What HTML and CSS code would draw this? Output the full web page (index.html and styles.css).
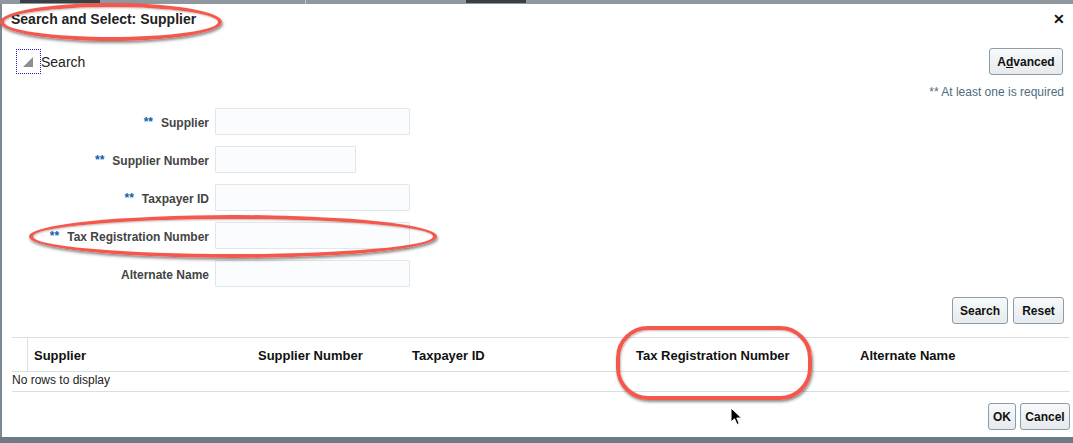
FILE: index.html
```html
<!DOCTYPE html>
<html>
<head>
<meta charset="utf-8">
<link rel="stylesheet" href="styles.css">
</head>
<body>
<div class="backdrop"><span class="blob b1"></span><span class="blob b2"></span><span class="blob b3"></span></div>
<div class="dialog">
  <div class="dlg-head">
    <span class="title">Search and Select: Supplier</span>
    <span class="close">&#x2715;</span>
  </div>
  <div class="search-bar">
    <div class="disclose"><span class="tri"></span></div>
    <span class="search-label">Search</span>
    <button class="btn adv">A<u>d</u>vanced</button>
  </div>
  <div class="req-note">** At least one is required</div>
  <div class="form">
    <label class="lbl"><span class="star">**</span>Supplier</label><span class="inp w195"></span>
    <label class="lbl"><span class="star">**</span>Supplier Number</label><span class="inp w141"></span>
    <label class="lbl"><span class="star">**</span>Taxpayer ID</label><span class="inp w195"></span>
    <label class="lbl"><span class="star">**</span>Tax Registration Number</label><span class="inp w195"></span>
    <label class="lbl">Alternate Name</label><span class="inp w195"></span>
  </div>
  <div class="actions">
    <button class="btn">Search</button>
    <button class="btn">Reset</button>
  </div>
  <div class="table">
    <div class="thead">
      <div class="sel"></div>
      <div class="th c1">Supplier</div>
      <div class="th c2">Supplier Number</div>
      <div class="th c3">Taxpayer ID</div>
      <div class="th c4">Tax Registration Number</div>
      <div class="th c5">Alternate Name</div>
    </div>
    <div class="empty">No rows to display</div>
  </div>
  <div class="footer">
    <button class="btn">OK</button>
    <button class="btn">Cancel</button>
  </div>

  <div class="mark mark-title"></div>
  <div class="mark mark-field"></div>
  <div class="mark mark-col"></div>
  <svg class="cursor" width="14" height="20" viewBox="0 0 14 20"><path d="M1 1 L1 15 L4.5 11.8 L7 17.5 L9.2 16.5 L6.8 11 L11.5 11 Z" fill="#000" stroke="#fff" stroke-width="1"/></svg>
</div>
<div class="bottom-strip"></div>
</body>
</html>
```
FILE: styles.css
```css
* { box-sizing: border-box; }
html, body { margin: 0; padding: 0; }
body {
  width: 1073px;
  height: 443px;
  overflow: hidden;
  background: #7d8891;
  font-family: "Liberation Sans", Arial, Helvetica, sans-serif;
  color: #333;
}
.backdrop {
  height: 4px;
  background: #8f989f;
  position: relative;
  overflow: hidden;
}
.blob { position: absolute; top: 0; height: 3px; background: #3a3f44; }
.b1 { left: 20px; width: 80px; }
.b2 { left: 466px; width: 60px; }
.b3 { left: 305px; width: 1px; height: 4px; background: #c5ccd1; }
.dialog {
  position: relative;
  margin-left: 2px;
  height: 433px;
  background: #fff;
  display: flex;
  flex-direction: column;
}
.dlg-head {
  height: 30px;
  display: flex;
  align-items: center;
  justify-content: space-between;
  padding: 0 8px 0 9px;
}
.title { font-size: 14px; font-weight: bold; color: #222; }
.close { font-size: 14px; font-weight: bold; color: #111; }
.search-bar {
  margin-top: 14px;
  display: flex;
  align-items: center;
  padding: 0 10px 0 14px;
  height: 27px;
}
.disclose {
  width: 25px;
  height: 25px;
  border: 1px dotted #1a1acc;
  position: relative;
}
.tri {
  position: absolute;
  left: 6px;
  top: 7px;
  width: 0; height: 0;
  border-left: 10px solid transparent;
  border-bottom: 10px solid #8a8f94;
}
.search-label { font-size: 14px; color: #222; flex: 1; }
.btn {
  font-family: "Liberation Sans", Arial, sans-serif;
  font-size: 12px;
  font-weight: bold;
  color: #111;
  height: 27px;
  padding: 0 7px;
  border: 1px solid #8c9ca8;
  border-radius: 3px;
  background: linear-gradient(#f7f9fa, #e6eaed);
}
.adv { width: 74px; padding: 0; }
.req-note {
  margin-top: 10px;
  text-align: right;
  padding-right: 9px;
  font-size: 12px;
  color: #4f6d80;
  height: 14px;
  line-height: 14px;
}
.form {
  margin-top: 9px;
  display: grid;
  grid-template-columns: 207px auto;
  justify-content: start;
  column-gap: 6px;
  row-gap: 11px;
}
.lbl {
  font-size: 12px;
  font-weight: bold;
  color: #444;
  text-align: right;
  line-height: 27px;
  height: 27px;
  padding-top: 2px;
}
.star { color: #0d5fae; margin-right: 8px; font-size: 12px; position: relative; top: -1px; }
.inp {
  display: block;
  height: 27px;
  border: 1px solid #e1e6ea;
  background: #fbfcfd;
  border-radius: 1px;
}
.w195 { width: 195px; }
.w141 { width: 141px; }
.actions {
  margin-top: 10px;
  display: flex;
  justify-content: flex-end;
  gap: 5px;
  padding-right: 9px;
}
.actions .btn:first-child { width: 56px; }
.actions .btn:last-child { width: 51px; }
.table {
  margin-top: 13px;
  margin-left: 10px;
  margin-right: 3px;
}
.thead {
  display: flex;
  height: 35px;
  border-top: 1px solid #d8e0e6;
  border-bottom: 1px solid #d8e0e6;
  align-items: stretch;
}
.sel { width: 16px; border-right: 1px solid #d8e0e6; }
.th {
  font-size: 13px;
  font-weight: bold;
  color: #111;
  display: flex;
  align-items: center;
  padding-left: 6px;
  padding-top: 2px;
}
.c1 { width: 224px; }
.c2 { width: 154px; }
.c3 { width: 224px; }
.c4 { width: 224px; }
.c5 { flex: 1; }
.empty {
  font-size: 12px;
  color: #222;
  height: 20px;
  line-height: 16px;
  border-bottom: 1px solid #d8e0e6;
}
.footer {
  margin-top: 11px;
  display: flex;
  justify-content: flex-end;
  gap: 4px;
  padding-right: 3px;
}
.footer .btn:first-child { width: 28px; padding: 0; }
.footer .btn:last-child { width: 50px; padding: 0; }
.bottom-strip { height: 6px; background: #6f7a83; }

.mark {
  position: absolute;
  border: 4px solid #f4574c;
  box-shadow: 1px 2px 3px rgba(0,0,0,0.45), inset 1px 1px 2px rgba(0,0,0,0.25);
}
.mark-title {
  left: -2px; top: -1px;
  width: 222px; height: 38px;
  border-radius: 50%;
}
.mark-field {
  left: 27px; top: 211px;
  width: 408px; height: 43px;
  border-radius: 50%;
}
.mark-col {
  left: 614px; top: 322px;
  width: 196px; height: 74px;
  border-radius: 32px;
}
.cursor { position: absolute; left: 728px; top: 403px; }
```
